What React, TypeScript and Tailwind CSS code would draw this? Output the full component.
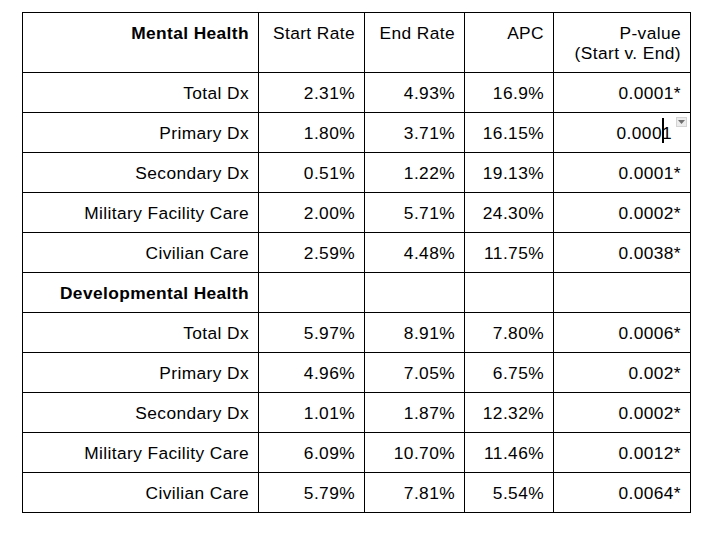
import React from "react";

type Row = { label: string; bold?: boolean; vals: string[] };

const rows: Row[] = [
  { label: "Total Dx", vals: ["2.31%", "4.93%", "16.9%", "0.0001*"] },
  { label: "Primary Dx", vals: ["1.80%", "3.71%", "16.15%", "CURSOR"] },
  { label: "Secondary Dx", vals: ["0.51%", "1.22%", "19.13%", "0.0001*"] },
  { label: "Military Facility Care", vals: ["2.00%", "5.71%", "24.30%", "0.0002*"] },
  { label: "Civilian Care", vals: ["2.59%", "4.48%", "11.75%", "0.0038*"] },
  { label: "Developmental Health", bold: true, vals: ["", "", "", ""] },
  { label: "Total Dx", vals: ["5.97%", "8.91%", "7.80%", "0.0006*"] },
  { label: "Primary Dx", vals: ["4.96%", "7.05%", "6.75%", "0.002*"] },
  { label: "Secondary Dx", vals: ["1.01%", "1.87%", "12.32%", "0.0002*"] },
  { label: "Military Facility Care", vals: ["6.09%", "10.70%", "11.46%", "0.0012*"] },
  { label: "Civilian Care", vals: ["5.79%", "7.81%", "5.54%", "0.0064*"] },
];

const cell = "border border-black pl-[9px] pr-[9px] pt-[10px] pb-[9px] text-right align-top";
const head = "border border-black px-[9px] pt-[10px] pb-[9px] text-right align-top";

function CursorCell() {
  return (
    <td className={cell + " relative !pr-[18px]"}>
      0.000
      <span className="relative inline-block w-0">
        <span className="absolute left-[0px] top-[-21px] w-[2px] h-[25px] bg-black" />
      </span>
      1
      <span className="absolute right-[3px] top-[4px] w-[11px] h-[10px] bg-[#ececec] border border-[#d4d4d4] flex items-center justify-center">
        <svg width="7" height="4" viewBox="0 0 7 4">
          <path d="M0 0 H7 L3.5 4 Z" fill="#6f6f6f" />
        </svg>
      </span>
    </td>
  );
}

export default function App() {
  return (
    <div
      className="w-[708px] h-[535px] bg-white pt-[12px] pl-[22px] text-black"
      style={{ fontFamily: '"Liberation Sans", Arial, sans-serif' }}
    >
      <table className="border-collapse table-fixed text-[17.33px] leading-[20px] tracking-[0.4px]">
        <colgroup>
          <col className="w-[236px]" />
          <col className="w-[106px]" />
          <col className="w-[100px]" />
          <col className="w-[89px]" />
          <col className="w-[137px]" />
        </colgroup>
        <thead>
          <tr>
            <th className={head + " font-bold"}>Mental Health</th>
            <th className={head + " font-normal"}>Start Rate</th>
            <th className={head + " font-normal"}>End Rate</th>
            <th className={head + " font-normal"}>APC</th>
            <th className={head + " font-normal"}>
              P-value
              <br />
              (Start v. End)
            </th>
          </tr>
        </thead>
        <tbody>
          {rows.map((r, i) => (
            <tr key={i}>
              <td className={cell + (r.bold ? " font-bold" : "")}>{r.label}</td>
              {r.vals.map((v, j) =>
                v === "CURSOR" ? (
                  <CursorCell key={j} />
                ) : (
                  <td key={j} className={cell}>
                    {v || "\u00a0"}
                  </td>
                )
              )}
            </tr>
          ))}
        </tbody>
      </table>
    </div>
  );
}
